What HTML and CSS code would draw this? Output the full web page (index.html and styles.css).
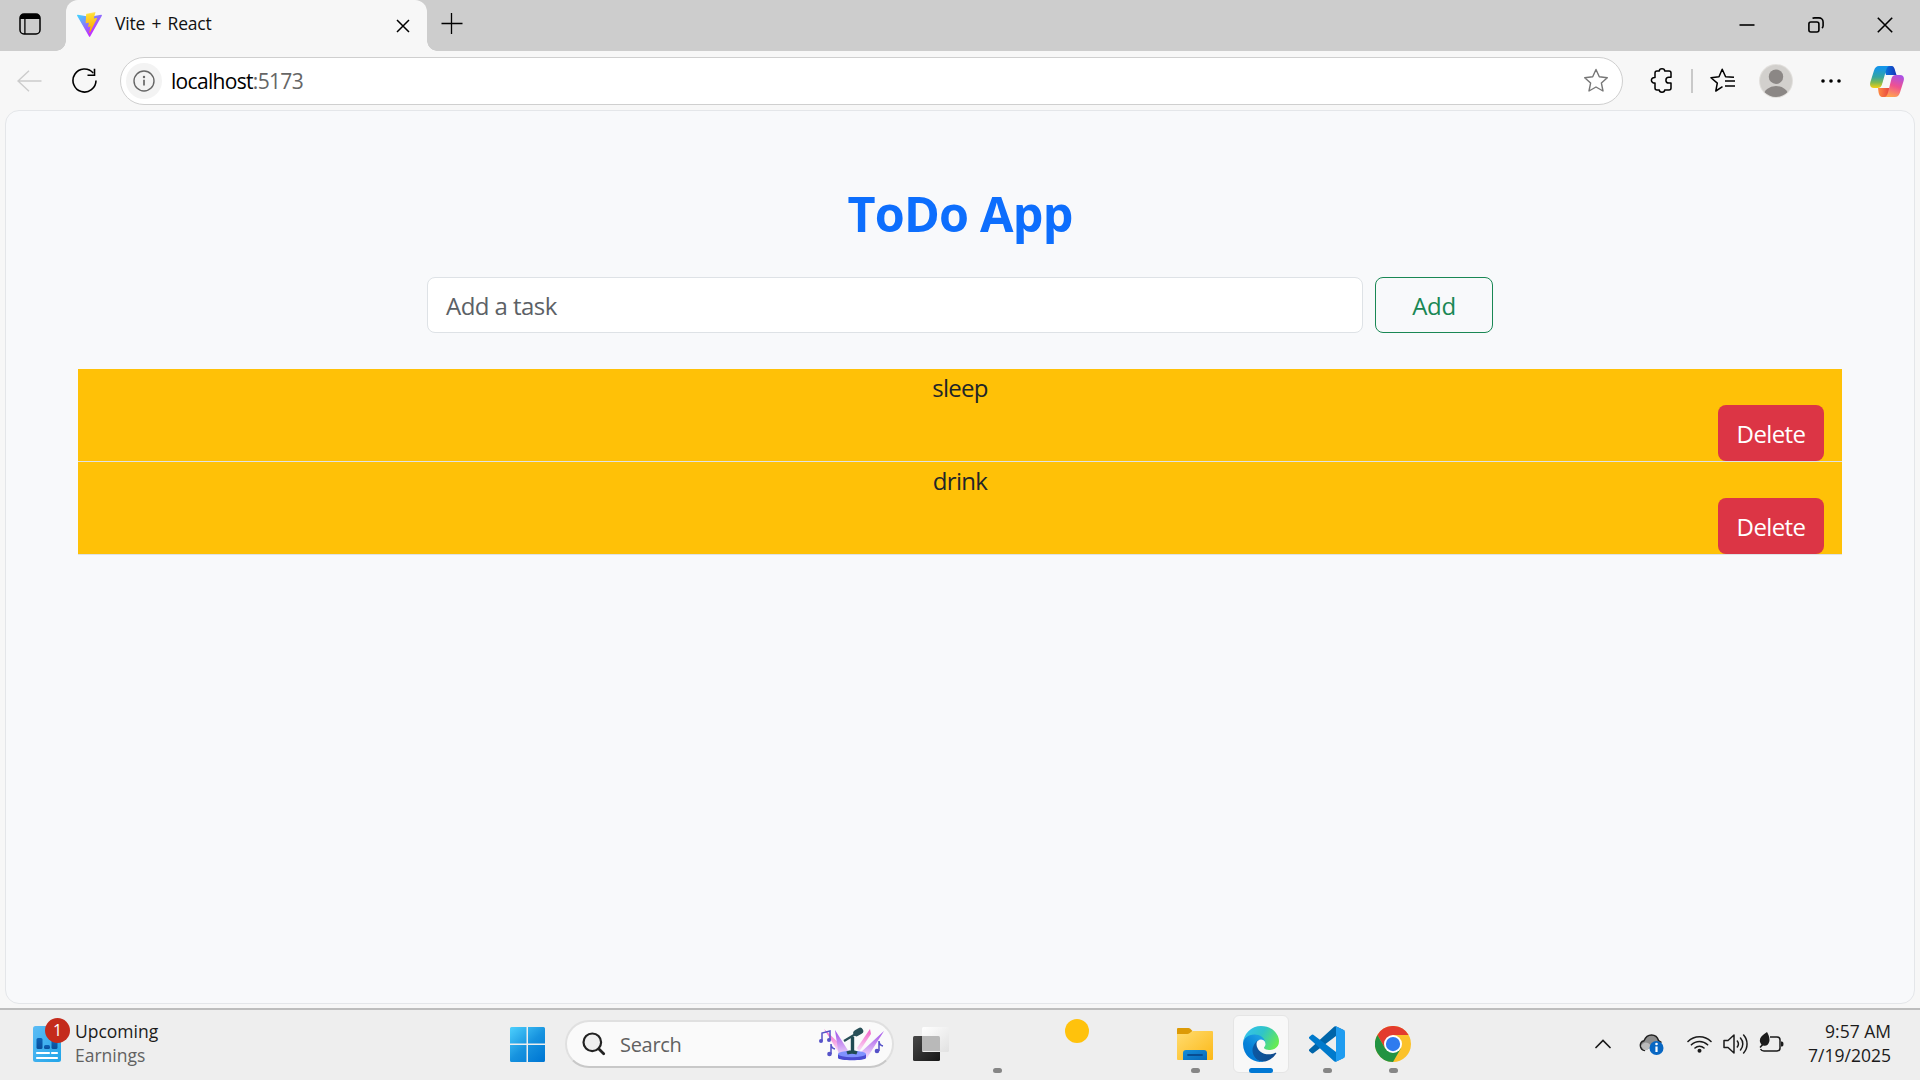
FILE: index.html
```html
<!DOCTYPE html>
<html lang="en">
<head>
<meta charset="utf-8">
<title>Vite + React</title>
<link rel="stylesheet" href="styles.css">
</head>
<body>
<div class="screen">
  <header class="tabstrip">
    <button class="tab-actions" aria-label="Tab actions">
      <svg width="22" height="22" viewBox="0 0 22 22"><rect x="1" y="1" width="20" height="20" rx="4" fill="none" stroke="#000" stroke-width="1.5"/><path d="M1 6V5a4 4 0 0 1 4-4h12a4 4 0 0 1 4 4v1z" fill="#000"/><path d="M5.9 6v15" stroke="#000" stroke-width="1.3"/></svg>
    </button>
    <div class="tab">
      <svg class="tab-logo" width="25" height="25" viewBox="0 0 256 257"><defs><linearGradient id="va" x1="-.8%" x2="57.6%" y1="7.6%" y2="78.4%"><stop offset="0" stop-color="#41d1ff"/><stop offset="1" stop-color="#bd34fe"/></linearGradient><linearGradient id="vb" x1="43.4%" x2="50.3%" y1="2.2%" y2="89%"><stop offset="0" stop-color="#ffea83"/><stop offset=".1" stop-color="#ffdd35"/><stop offset="1" stop-color="#ffa800"/></linearGradient></defs><path fill="url(#va)" d="M255.2 37.9 134.9 253c-2.5 4.4-8.9 4.5-11.4 0L.9 37.9c-2.7-4.7 1.3-10.5 6.7-9.5l120.4 21.5c.8.1 1.5.1 2.3 0l117.9-21.5c5.3-1 9.4 4.8 7 9.5Z"/><path fill="url(#vb)" d="M185.4 0 96.4 17.5a3.3 3.3 0 0 0-2.6 3l-5.5 92.5c-.1 2.2 1.9 3.9 4 3.4l24.8-5.7c2.3-.6 4.4 1.5 3.9 3.8l-7.4 36.1c-.5 2.4 1.8 4.5 4.1 3.8l15.3-4.7c2.4-.7 4.7 1.4 4.2 3.8l-11.7 56.7c-.7 3.5 4 5.5 6 2.4l1.3-2 72.5-144.7c1.2-2.4-.9-5.2-3.5-4.7l-25.5 4.9c-2.4.5-4.5-1.8-3.8-4.1L189.2 4.1c.7-2.3-1.4-4.6-3.8-4.1Z"/></svg>
      <span class="tab-title">Vite + React</span>
      <svg class="tab-close" width="14" height="14" viewBox="0 0 14 14"><path d="M1 1l12 12M13 1L1 13" stroke="#000" stroke-width="1.5"/></svg>
    </div>
    <button class="new-tab" aria-label="New tab"><svg width="22" height="22" viewBox="0 0 22 22"><path d="M.5 10.5h21M10.5 0v21" stroke="#000" stroke-width="1.3"/></svg></button>
    <div class="window-controls">
      <svg width="16" height="16" viewBox="0 0 16 16"><path d="M.5 8h15" stroke="#000" stroke-width="1.6"/></svg>
      <svg width="16" height="16" viewBox="0 0 16 16"><rect x=".9" y="5" width="10" height="10" rx="2" fill="none" stroke="#000" stroke-width="1.6"/><path d="M4.6 1.6Q5.2.9 6.5.9h4.4a4.2 4.2 0 0 1 4.2 4.2v3.600q0 1.600-1.200 2.300" fill="none" stroke="#000" stroke-width="1.6"/></svg>
      <svg width="16" height="16" viewBox="0 0 16 16"><path d="M.8.8l14.400 14.400M15.200.8L.8 15.200" stroke="#000" stroke-width="1.6"/></svg>
    </div>
  </header>

  <nav class="toolbar">
    <svg class="back" width="25" height="22" viewBox="0 0 25 22"><path d="M24.500 11H1M12 .8L1 11l11 10.200" fill="none" stroke="#ccc" stroke-width="1.4"/></svg>
    <svg class="reload" width="25" height="25" viewBox="0 0 25 25"><path d="M24 12.500A11.500 11.500 0 1 1 21.200 5" fill="none" stroke="#000" stroke-width="1.600"/><path d="M22.500.7v6.500h-7" fill="none" stroke="#000" stroke-width="1.600"/></svg>
    <div class="address">
      <span class="site-info"><svg width="22" height="22" viewBox="0 0 22 22"><circle cx="11" cy="11" r="10" fill="none" stroke="#666" stroke-width="1.400"/><path d="M11 9.800v5.700" stroke="#666" stroke-width="1.700"/><circle cx="11" cy="7" r="1.200" fill="#666"/></svg></span>
      <span class="url">localhost<span class="port">:5173</span></span>
      <svg class="star" width="26" height="25" viewBox="0 0 26 25"><path d="M13 1.500l3.300 7.300 8 .9-5.900 5.400 1.600 7.900-7-4-7 4 1.600-7.900-5.900-5.400 8-.9z" fill="none" stroke="#777" stroke-width="1.400" stroke-linejoin="round"/></svg>
    </div>
    <svg class="puzzle" width="24" height="25" viewBox="0 0 24 25"><path d="M7 3h2.300C9.300 1.700 10.500.8 12 .8s2.700.9 2.700 2.200H19q2 0 2 2v4.300h-2.200c-1.800 0-2.900 1.300-2.900 2.900s1.100 2.900 2.900 2.900H21V20q0 2-2 2h-4.300c0 1.300-1.200 2.200-2.700 2.200S9.300 23.300 9.300 22H7q-2 0-2-2v-4.900C3 15.300 1.400 14 1.400 12.300S3 9.300 5 9.500V5q0-2 2-2z" fill="none" stroke="#000" stroke-width="1.500" stroke-linejoin="round"/></svg>
    <span class="divider"></span>
    <svg class="favorites" width="25" height="25" viewBox="0 0 25 25"><path d="M12.500 18.700L5.800 23l1.500-7.900L1 9.700l8-.9 3.200-7.500 3.400 7.500 8.400.5M15 13h10M15 18h10" fill="none" stroke="#000" stroke-width="1.500" stroke-linejoin="round"/></svg>
    <svg class="avatar" width="34" height="34" viewBox="0 0 34 34"><defs><clipPath id="av"><circle cx="17" cy="17" r="16"/></clipPath></defs><circle cx="17" cy="17" r="17" fill="#e2e0dd"/><circle cx="17" cy="17" r="16" fill="#d2d0cd"/><g fill="#8b8785" clip-path="url(#av)"><circle cx="17" cy="12.700" r="7.200"/><ellipse cx="17" cy="32" rx="12.500" ry="10"/></g></svg>
    <svg class="more" width="20" height="4" viewBox="0 0 20 4"><circle cx="2" cy="2" r="1.800"/><circle cx="10" cy="2" r="1.800"/><circle cx="18" cy="2" r="1.800"/></svg>
    <svg class="copilot" width="34" height="31" viewBox="0 0 34 31"><defs><linearGradient id="ca" x1="0" y1="0" x2="0" y2="1"><stop offset=".1" stop-color="#1596e8"/><stop offset=".5" stop-color="#35a5a0"/><stop offset=".75" stop-color="#7fb952"/><stop offset="1" stop-color="#f6cf12"/></linearGradient><linearGradient id="cb" x1=".7" y1="0" x2=".4" y2="1"><stop offset="0" stop-color="#ab51e6"/><stop offset=".5" stop-color="#ef5191"/><stop offset="1" stop-color="#ffa350"/></linearGradient><linearGradient id="cc"><stop offset="0" stop-color="#087fe5"/><stop offset="1" stop-color="#1636b9"/></linearGradient><linearGradient id="cd"><stop offset="0" stop-color="#ff8d43"/><stop offset="1" stop-color="#e43b3f"/></linearGradient></defs><path d="M13 0h8c3 0 3.500 2 4.300 5.200L26.500 9H16z" fill="url(#cc)"/><path d="M8 22h11l2 9h-8c-3 0-4-2-4.500-5z" fill="url(#cd)"/><path d="M9 0h11c-2.200 0-3.200 1.700-4 4.500l-4 14c-.8 2.500-2 3.500-4.500 3.500H4c-3.500 0-4.600-2.600-3.600-6L4 4.500C5 1.500 6.500 0 9 0z" fill="url(#ca)"/><path d="M26 9h4c3.500 0 4.600 2.600 3.600 6L30 26.500c-1 3-2.500 4.500-5 4.500H14c2.200 0 3.200-1.700 4-4.500l3.500-14C22.300 10 23.500 9 26 9z" fill="url(#cb)"/><path d="M18.500 9H24c-2 0-3 1-3.700 3l-2.200 7c-.8 2-1.800 3-3.800 3H10c1.500-.5 2-2 2.500-3.500l2-6.500c.7-2 1.800-3 4-3z" fill="#f7f7f7"/></svg>
  </nav>

  <main class="page">
    <h1>ToDo App</h1>
    <form class="task-form">
      <div class="task-input">Add a task</div>
      <div class="btn-add">Add</div>
    </form>
    <div class="task"><div class="task-name">sleep</div><div class="btn-delete">Delete</div></div>
    <div class="task"><div class="task-name">drink</div><div class="btn-delete">Delete</div></div>
  </main>

  <footer class="taskbar">
    <div class="widget">
      <div class="widget-icon">
        <svg width="28" height="36" viewBox="0 0 28 36"><defs><linearGradient id="wa" x1="0" y1="0" x2="1" y2="1"><stop offset="0" stop-color="#5cbcf5"/><stop offset="1" stop-color="#20a4e8"/></linearGradient><linearGradient id="wb" x1="0" y1="0" x2="0" y2="1"><stop offset="0" stop-color="#0b63b8"/><stop offset="1" stop-color="#0b4e99"/></linearGradient></defs><rect width="28" height="36" rx="2.500" fill="url(#wa)"/><g fill="url(#wb)"><rect x="3.500" y="12" width="6" height="11" rx="1.500"/><rect x="11" y="19" width="6" height="4" rx="1.500"/><rect x="18.500" y="14" width="6" height="9" rx="1.500"/></g><path d="M4 27h12M19 27h5M4 32h20" stroke="#fff" stroke-width="2.200" stroke-linecap="round"/></svg>
        <span class="badge">1</span>
      </div>
      <div class="widget-text"><span class="upcoming">Upcoming</span><span class="earnings">Earnings</span></div>
    </div>
    <svg class="start" width="35" height="35" viewBox="0 0 35 35"><defs><linearGradient id="wi" gradientUnits="userSpaceOnUse" x1="0" y1="0" x2="30" y2="35"><stop offset="0" stop-color="#4dd0fd"/><stop offset=".55" stop-color="#1793df"/><stop offset="1" stop-color="#0078d4"/></linearGradient></defs><path d="M1.500 0H16.500V16.500H0V1.500Q0 0 1.500 0zM18 0h15.500Q35 0 35 1.500v15H18zM0 18h16.500v17H1.500Q0 35 0 33.500zM18 18h17v15.500q0 1.500-1.500 1.500H18z" fill="url(#wi)"/></svg>
    <div class="search">
      <svg width="24" height="24" viewBox="0 0 24 24"><circle cx="10.300" cy="10.300" r="8.800" fill="#efefef" stroke="#222" stroke-width="2.200"/><path d="M16.700 16.700l5 5" stroke="#222" stroke-width="2.800" stroke-linecap="round"/></svg>
      <span class="search-label">Search</span>
      <svg class="concert" width="66" height="34" viewBox="0 0 66 34"><defs><linearGradient id="sa" x1="0" y1="0" x2="0" y2="1"><stop offset="0" stop-color="#f35ac6"/><stop offset="1" stop-color="#fae6fb"/></linearGradient><linearGradient id="sb" x1="0" y1="0" x2="0" y2="1"><stop offset="0" stop-color="#9f4be8"/><stop offset="1" stop-color="#f2dcfb"/></linearGradient></defs><path d="M5 2l19 18-4 6z" fill="url(#sa)"/><path d="M16 3l14 22-10 5z" fill="url(#sb)"/><path d="M51 2l1 5-12 18-2-4z" fill="url(#sa)"/><path d="M65 4L48 31l-7-5z" fill="url(#sb)"/><path d="M19 27v4c0 3 28 3 28 0v-4z" fill="#4a4bd1"/><ellipse cx="33" cy="27" rx="14" ry="3.300" fill="#7f91ff"/><path d="M28 26q5-2 10 0M33.500 25V10" stroke="#204b52" stroke-width="3.400"/><path d="M25 14L40 5" stroke="#284f57" stroke-width="2.200"/><path d="M37.500 6l3.500-2" stroke="#284f57" stroke-width="6.500" stroke-linecap="round"/><g fill="none" stroke="#5552c8" stroke-width="1.500"><path d="M3 14V6l8-2v9M12 27V17q0 4 4 5M60 24V14q0 4 4 5"/></g><g fill="#5552c8"><circle cx="2" cy="14" r="2"/><circle cx="10" cy="13" r="2"/><circle cx="10.500" cy="27" r="2.300"/><circle cx="58" cy="24" r="2.300"/></g></svg>
    </div>
    <div class="apps">
      <div class="slot"><svg width="36" height="34" viewBox="0 0 36 34"><defs><linearGradient id="ta" x1="0" y1="0" x2="1" y2="1"><stop offset="0" stop-color="#484848"/><stop offset="1" stop-color="#161616"/></linearGradient><linearGradient id="tb" x1="0" y1="0" x2="1" y2="1"><stop offset="0" stop-color="#fff"/><stop offset="1" stop-color="#e1e1e1"/></linearGradient></defs><rect y="9" width="27" height="25" rx="1.500" fill="url(#ta)"/><rect x="9" width="27" height="25" rx="1.500" fill="url(#tb)"/><path d="M9 9h16.500q1.500 0 1.500 1.500V24H9z" fill="#b9b9b9"/></svg></div>
      <div class="slot running"></div>
      <div class="slot"><span class="sun"></span></div>
      <div class="slot"></div>
      <div class="slot running"><svg width="36" height="36" viewBox="0 0 36 36"><defs><linearGradient id="fa" x1="0" y1="0" x2="1" y2="1"><stop offset="0" stop-color="#ffdc70"/><stop offset="1" stop-color="#fcb817"/></linearGradient><linearGradient id="fb" x1="0" y1="0" x2="1" y2="1"><stop offset="0" stop-color="#148ed9"/><stop offset="1" stop-color="#0868b8"/></linearGradient></defs><path d="M1 2h10.500q1 0 1.800.8L15.500 5l-3 3H0V3q0-1 1-1z" fill="#dc9a06"/><path d="M0 8h10.500q1 0 2-.8l2-1.500q.8-.7 2-.7H35q1 0 1 1v27q0 1-1 1H1q-1 0-1-1z" fill="url(#fa)"/><path d="M6 34v-7q0-3 3-3h18q3 0 3 3v7z" fill="url(#fb)"/><path d="M11 29h14" stroke="#084d91" stroke-width="1.800" stroke-linecap="round"/></svg></div>
      <div class="slot active"><svg width="36" height="36" viewBox="0 0 256 256"><defs><linearGradient id="ea" x1="63.300" x2="241.700" y1="177" y2="177" gradientUnits="userSpaceOnUse" gradientTransform="translate(-4.600 -5)"><stop offset="0" stop-color="#0c59a4"/><stop offset="1" stop-color="#114a8b"/></linearGradient><linearGradient id="eb" x1="157.400" x2="46" y1="161.400" y2="282.700" gradientUnits="userSpaceOnUse" gradientTransform="translate(-4.600 -40)"><stop offset="0" stop-color="#1b9de2"/><stop offset=".5" stop-color="#0883d9"/><stop offset="1" stop-color="#0078d4"/></linearGradient><linearGradient id="ec" x1="0" y1=".2" x2="1" y2=".6"><stop offset="0" stop-color="#35c1f1"/><stop offset=".5" stop-color="#30c4c8"/><stop offset="1" stop-color="#66eb53"/></linearGradient></defs><path fill="url(#ea)" d="M231 190.500c-3.400 1.800-6.900 3.400-10.500 4.700a101 101 0 0 1-35.900 6.500c-47.300 0-88.500-32.500-88.500-74.300.1-11.400 6.400-21.900 16.400-27.300-42.800 1.800-53.800 46.400-53.800 72.500 0 74 68.100 81.400 82.800 81.400 7.900 0 19.800-2.300 27-4.600l1.300-.4a128.300 128.300 0 0 0 66.600-52.800 4 4 0 0 0-5.400-5.700Z"/><path fill="url(#eb)" d="M105.700 241.400a79 79 0 0 1-22.700-21.300 80.700 80.700 0 0 1 29.500-120c3.200-1.500 8.500-4.100 15.600-4 10.100.1 19.600 4.900 25.700 13a32 32 0 0 1 6.300 18.700c0-.2 24.500-79.600-80-79.600-43.900 0-80 41.700-80 78.200a130 130 0 0 0 12.100 56 128 128 0 0 0 156.400 67 75.500 75.500 0 0 1-62.900-8Z"/><path fill="url(#ec)" d="M152.300 148.900c-.8 1-3.300 2.500-3.300 5.700 0 2.600 1.700 5.100 4.700 7.200 14.400 10 41.500 8.700 41.600 8.700 10.700 0 21.100-2.900 30.300-8.300A61.400 61.400 0 0 0 256 109.300c.3-22.400-8-37.300-11.300-43.900C223.500 23.900 177.700 0 128 0A128 128 0 0 0 0 126.200c.5-36.500 36.800-66 80-66 3.500 0 23.500.3 42 10 16.300 8.600 24.900 18.900 30.800 29.200 6.200 10.700 7.300 24.100 7.300 29.500 0 5.300-2.700 13.300-7.800 20Z"/></svg></div>
      <div class="slot running"><svg width="36" height="36" viewBox="0 0 100 100"><path fill="#0065a9" d="M96 11L76 1.500a6 6 0 0 0-7 1.200L1.300 64.300a4 4 0 0 0 0 5.900l5.500 5a4 4 0 0 0 5.100.2L93.400 13.700A4 4 0 0 1 100 17v-.2A6 6 0 0 0 96 11z"/><path fill="#007acc" d="M96 89l-20 9.500a6 6 0 0 1-7-1.200L1.300 35.700a4 4 0 0 1 0-5.900l5.500-5a4 4 0 0 1 5.100-.2l81.500 61.700A4 4 0 0 0 100 83v.2A6 6 0 0 1 96 89z"/><path fill="#1f9cf0" d="M76 98.500a6 6 0 0 1-7-1.200c2.200 2.200 6 .7 6-2.500V5.200c0-3.200-3.800-4.700-6-2.500a6 6 0 0 1 7-1.200l20.500 9.900A6 6 0 0 1 100 16.800v66.400a6 6 0 0 1-3.500 5.400z"/></svg></div>
      <div class="slot running"><svg width="36" height="36" viewBox="0 0 48 48"><circle cx="24" cy="24" r="24" fill="#fbc22b"/><path d="M24 12h20.800A24 24 0 0 0 3.200 12l10.400 18z" fill="#e33b2e"/><path d="M3.200 12A24 24 0 0 0 24 48l10.400-18H13.600z" fill="#229342"/><circle cx="24" cy="24" r="12" fill="#fff"/><circle cx="24" cy="24" r="9.500" fill="#2f7bef"/></svg></div>
    </div>
    <div class="tray">
      <svg class="chevron" width="16" height="10" viewBox="0 0 16 10"><path d="M1 8.500l7-7 7 7" fill="none" stroke="#1b1b1b" stroke-width="1.700" stroke-linecap="round"/></svg>
      <svg class="cloud" width="25" height="21" viewBox="0 0 25 21"><path d="M6 16.500A5 5 0 0 1 5 6.700C7 2 10 1 12.500 1c3.500 0 6 2 7 5.500l3 2" fill="#8d8d8d" stroke="#222" stroke-width="1.500"/><path d="M2 12q3-5 7-3l4 3-5 4H5z" fill="#bbb"/><circle cx="17.500" cy="14" r="7" fill="#0867c3"/><path d="M17.500 12.500V18" stroke="#fff" stroke-width="2.200"/><circle cx="17.500" cy="10" r="1.300" fill="#fff"/></svg>
      <svg class="wifi" width="25" height="18" viewBox="0 0 25 18"><g fill="none" stroke="#1b1b1b" stroke-width="1.600" stroke-linecap="round"><path d="M1 6.500a16.300 16.300 0 0 1 23 0M4.400 9.800a11.500 11.500 0 0 1 16.200 0M8 13a6.500 6.500 0 0 1 9 0"/></g><circle cx="12.500" cy="15.800" r="2" fill="#1b1b1b"/></svg>
      <svg class="volume" width="25" height="20" viewBox="0 0 25 20"><g fill="none" stroke="#1b1b1b" stroke-width="1.500" stroke-linejoin="round" stroke-linecap="round"><path d="M1 6.500h4L11 1v18l-6-5.500H1zM14.300 7a5 5 0 0 1 0 6M17.500 4a9 9 0 0 1 0 12M20.600 1a13.500 13.500 0 0 1 0 18"/></g></svg>
      <svg class="battery" width="25" height="21" viewBox="0 0 25 21"><path d="M11 5h7q3 0 3 3v8q0 3-3 3H5q-2.500 0-3.500-2" fill="none" stroke="#1b1b1b" stroke-width="1.500"/><path d="M22 9.500h1q1.500 0 1.500 2.500T23 14.500h-1z" fill="#1b1b1b"/><path d="M8 0c1.500 2.500 3 6 2.300 9.500C9.500 13 7 14.500 4 13.500L1.500 16 .5 15l2-2.500C-1 8 1 4.500 8 0z" fill="#1b1b1b"/></svg>
      <div class="clock"><span class="time">9:57 AM</span><span class="date">7/19/2025</span></div>
    </div>
  </footer>
</div>
</body>
</html>
```
FILE: styles.css
```css
* { box-sizing: border-box; }
body { margin: 0; font-family: "Open Sans", "Noto Sans", sans-serif; }
svg { display: block; flex: none; }
button { border: 0; padding: 0; background: none; }
.screen { width: 1920px; height: 1080px; overflow: hidden; display: flex; flex-direction: column; background: #f7f7f7; }

.tabstrip { height: 51px; flex: none; display: flex; background: #cdcdcd; }
.tab-actions { width: 66px; padding: 13px 0 0 19px; display: flex; background: #cdcdcd; }
.tab { width: 361px; height: 51px; display: flex; align-items: center; padding: 0 17px 3px 11px; background: #f7f7f7; border-radius: 12px 12px 0 0; position: relative; }
.tab::before, .tab::after { content: ""; position: absolute; bottom: 0; width: 10px; height: 10px; }
.tab::before { left: -10px; background: radial-gradient(circle at 0 0, #cdcdcd 9.5px, #f7f7f7 10px); }
.tab::after { right: -10px; background: radial-gradient(circle at 100% 0, #cdcdcd 9.5px, #f7f7f7 10px); }
.tab-title { margin: 0 0 2px 13px; font-size: 17.500px; line-height: 24px; word-spacing: 2px; letter-spacing: -.2px; color: #111; white-space: nowrap; }
.tab-close { margin: 3px 0 0 auto; }
.new-tab { margin: 13px 0 0 14px; align-self: flex-start; }
.window-controls { margin-left: auto; display: flex; gap: 53px; padding: 17px 27px 0 0; }

.toolbar { height: 59px; flex: none; display: flex; align-items: center; padding: 0 16px 0 17px; }
.reload { margin-left: 30px; }
.address { width: 1504px; height: 48px; margin-left: 23px; padding: 0 13px 0 5px; display: flex; align-items: center; border: 1px solid #cfcfcf; border-radius: 24px; background: #fff; }
.site-info { width: 36px; height: 36px; border-radius: 50%; background: #f3f3f3; display: flex; align-items: center; justify-content: center; }
.url { margin-left: 9px; font-size: 21px; line-height: 28px; letter-spacing: -.68px; color: #000; }
.port { color: #666; }
.star { margin-left: auto; }
.puzzle { margin-left: 27px; }
.divider { width: 2px; height: 24px; margin-left: 17px; background: #c9c9c9; }
.favorites { margin-left: 17px; }
.avatar { margin-left: 24px; }
.more { margin-left: 28px; }
.copilot { margin-left: 29px; margin-top: 2px; }

.page { height: 894px; flex: none; margin: 0 5px; padding: 68px 72px 0; border: 1px solid #e4e6e9; border-radius: 14px; background: #f8f9fb; color: #212529; font-size: 24px; }
h1 { margin: 0; text-align: center; font-size: 48.500px; line-height: 68px; font-weight: 700; letter-spacing: -.8px; color: #0d6efd; }
.task-form { display: flex; width: 1066px; margin: 30px auto 0; gap: 12px; }
.task-input, .btn-add, .btn-delete { height: 56px; display: flex; align-items: center; border-radius: 8px; white-space: nowrap; }
.task-input { width: 936px; padding-left: 18px; border: 1px solid #dee2e6; background: #fff; color: #5c6166; letter-spacing: -.55px; }
.btn-add { width: 118px; justify-content: center; border: 1px solid #198754; color: #198754; letter-spacing: -.4px; }
.task { height: 93px; border-bottom: 1px solid #dee2e6; background: #ffc107; display: flex; flex-direction: column; padding-right: 18px; }
.task-form + .task { margin-top: 36px; }
.task-name { height: 36px; line-height: 38px; padding-left: 18px; text-align: center; letter-spacing: -.7px; }
.btn-delete { width: 106px; align-self: flex-end; justify-content: center; background: #dc3545; color: #fff; letter-spacing: -.6px; }

.taskbar { height: 72px; flex: none; margin-top: 4px; border-top: 2px solid #bdbdbd; background: #eee; display: flex; align-items: center; padding: 0 29px 2px 0; }
.widget { width: 510px; display: flex; padding-left: 33px; }
.widget-icon { position: relative; height: 36px; }
.badge { position: absolute; left: 12px; top: -8px; width: 25px; height: 25px; border-radius: 50%; background: #c42b1c; color: #fff; font-size: 16px; line-height: 24px; text-align: center; }
.widget-text { display: flex; flex-direction: column; margin: -7px 0 -5px 14px; font-size: 17.500px; line-height: 24px; color: #1b1b1b; }
.earnings { color: #616161; }
.search { width: 329px; height: 48px; margin-left: 20px; padding: 0 7px 0 15px; display: flex; align-items: center; border: 2px solid #e0e0e0; border-bottom-color: #c8c8c8; border-radius: 24px; background: #fafafa; }
.search-label { margin-left: 14px; font-size: 20px; letter-spacing: -.3px; color: #616161; }
.concert { margin-left: auto; }
.apps { display: flex; margin-left: 4px; }
.slot { width: 66px; height: 58px; position: relative; display: flex; align-items: center; justify-content: center; }
.running::after, .active::after { content: ""; position: absolute; bottom: 0; height: 5px; border-radius: 3px; }
.running::after { width: 9px; background: #868686; }
.active::after { width: 24px; background: #0078d4; }
.active::before { content: ""; position: absolute; inset: 0 5px; border: 1px solid #e5e5e5; border-radius: 6px; background: #f8f8f8; }
.active svg { position: relative; }
.sun { position: absolute; left: 35px; top: 4px; width: 24px; height: 24px; border-radius: 50%; background: #ffc20c; }
.tray { display: flex; align-items: center; margin-left: auto; }
.cloud { margin-left: 28px; }
.wifi { margin-left: 23px; }
.volume { margin-left: 11px; }
.battery { margin: -4px 0 0 11px; }
.clock { width: 107px; display: flex; flex-direction: column; align-items: flex-end; font-size: 17.500px; line-height: 24px; color: #1b1b1b; margin-top: -2px; }
```
